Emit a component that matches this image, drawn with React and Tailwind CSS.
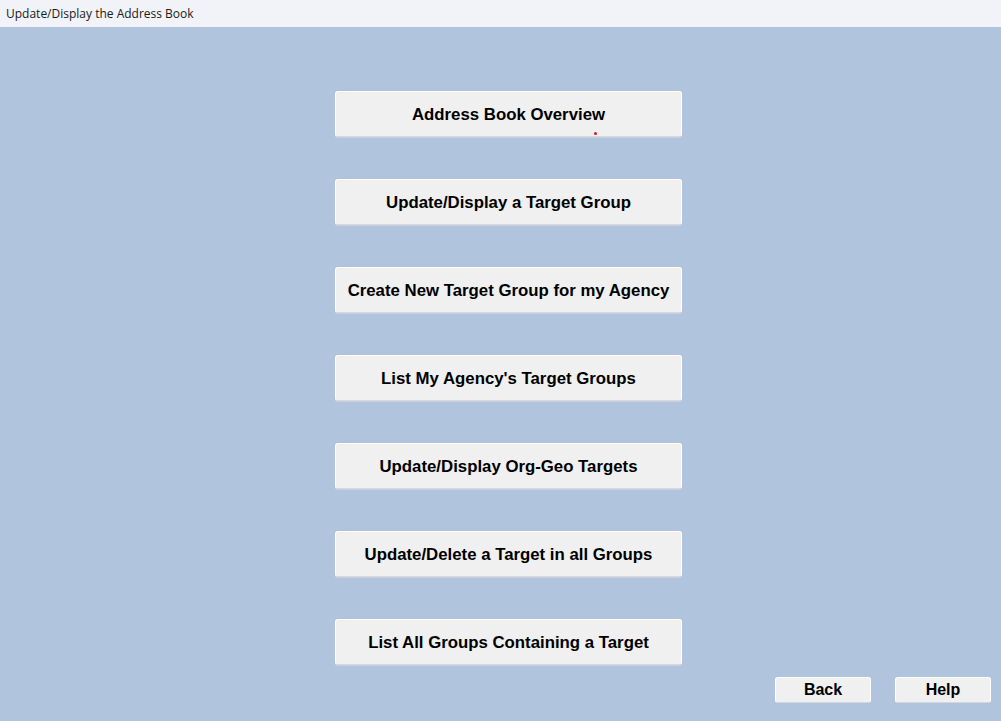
const MENU_ITEMS = [
  'Address Book Overview',
  'Update/Display a Target Group',
  'Create New Target Group for my Agency',
  "List My Agency's Target Groups",
  'Update/Display Org-Geo Targets',
  'Update/Delete a Target in all Groups',
  'List All Groups Containing a Target',
];

function MenuButton({ label, children }) {
  return (
    <button
      type="button"
      className="relative h-[46px] w-[347px] rounded-[3px] border border-white border-b-[#d4d8de] bg-[#f0f0f0] pt-[2px] text-[16.8px] font-bold text-black shadow-[0_1px_0_#c9d1dc]"
    >
      {label}
      {children}
    </button>
  );
}

function App() {
  return (
    <div
      className="flex h-[721px] w-[1001px] flex-col overflow-hidden bg-[#b0c4de]"
      style={{ fontFamily: '"Liberation Sans", Arial, sans-serif' }}
    >
      <div className="flex h-[27px] items-center bg-[#f1f3f8] pl-[6px] text-[12px] text-[#1a1a1a] [font-family:'Open_Sans',sans-serif]">
        Update/Display the Address Book
      </div>

      <div className="flex flex-col gap-[42px] pl-[335px] pt-[64px]">
        {MENU_ITEMS.map((item, i) => (
          <MenuButton key={item} label={item}>
            {i === 0 && (
              <span className="absolute left-[258px] top-[40px] h-[3px] w-[3px] rounded-full bg-[#e0102a]" />
            )}
          </MenuButton>
        ))}
      </div>

      <div className="mt-[12px] flex justify-end gap-[24px] pr-[10px]">
        <button
          type="button"
          className="h-[26px] w-[96px] rounded-[3px] border border-white border-b-[#d4d8de] bg-[#f0f0f0] text-[16px] font-bold text-black"
        >
          Back
        </button>
        <button
          type="button"
          className="h-[26px] w-[96px] rounded-[3px] border border-white border-b-[#d4d8de] bg-[#f0f0f0] text-[16px] font-bold text-black"
        >
          Help
        </button>
      </div>
    </div>
  );
}

export default App;
